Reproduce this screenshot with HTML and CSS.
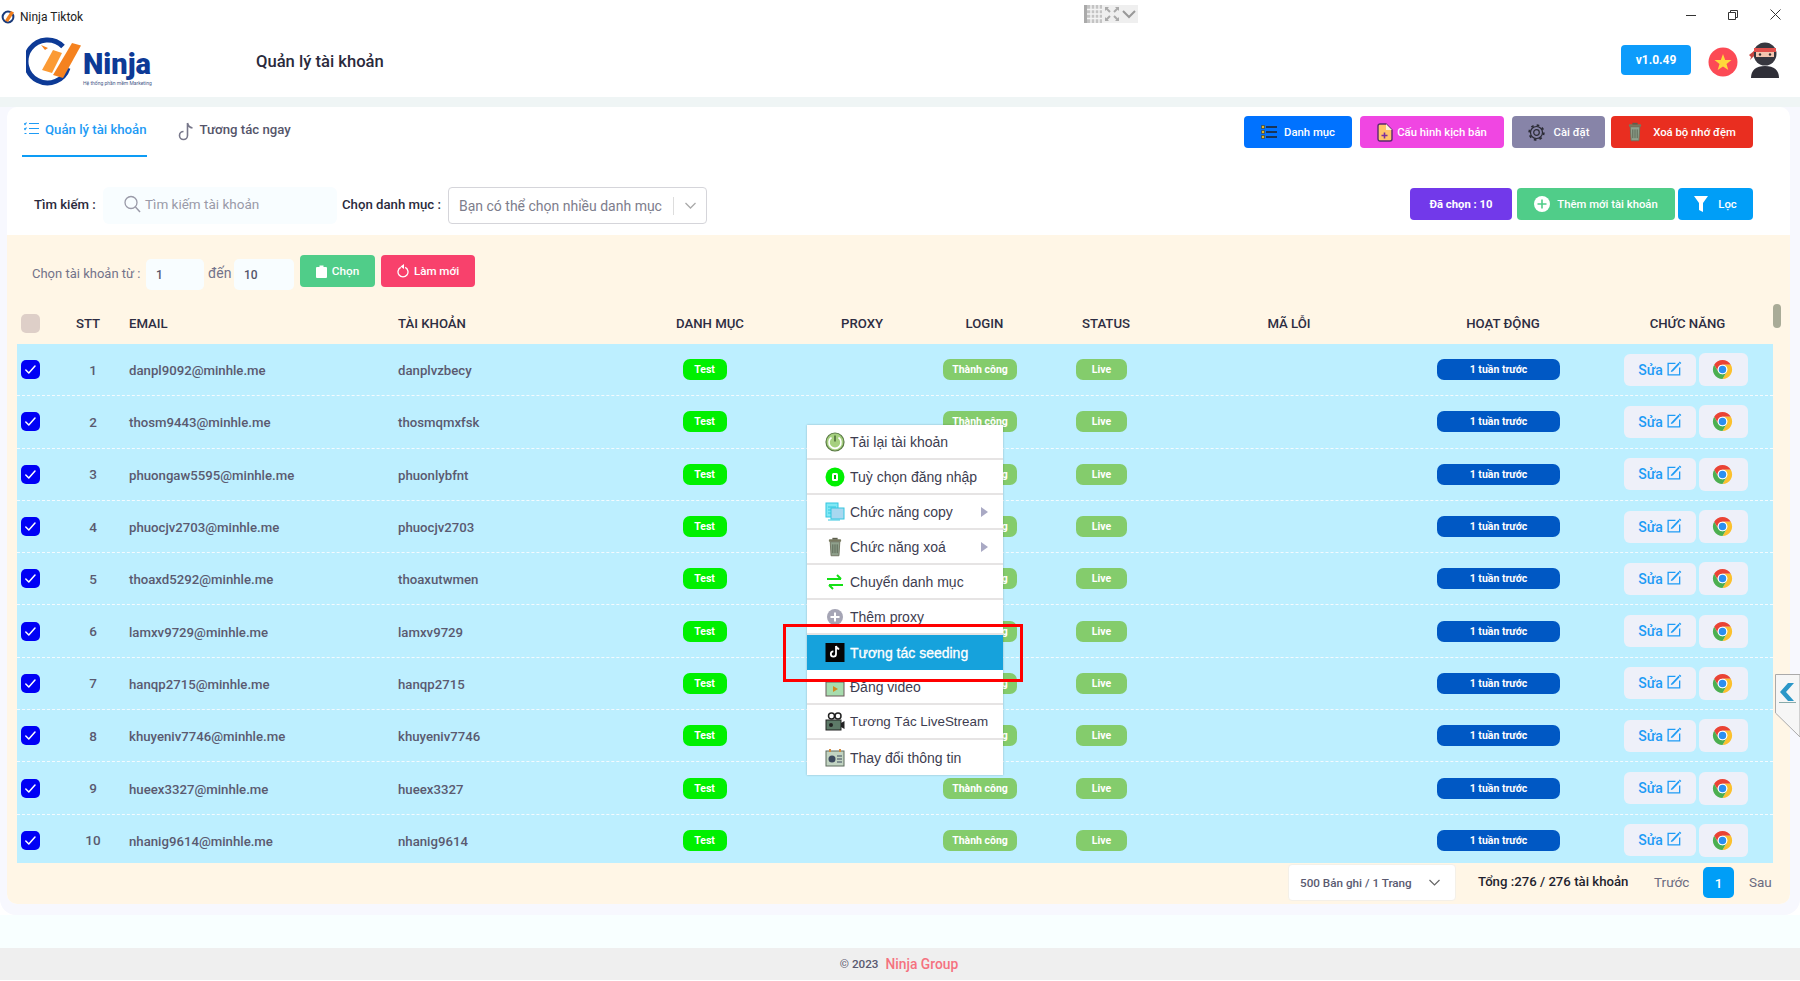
FILE: index.html
```html
<!DOCTYPE html>
<html lang="vi">
<head>
<meta charset="utf-8">
<title>Ninja Tiktok</title>
<link rel="stylesheet" href="styles.css">
</head>
<body>
<svg class="sprite" width="0" height="0" aria-hidden="true">
  <symbol id="chrome" viewBox="0 0 48 48">
    <path fill="#ea4335" d="M4.95 13A22 22 0 0 1 43.05 13H24A11 11 0 0 0 14.47 29.5Z"/>
    <path fill="#fbc02d" transform="rotate(120 24 24)" d="M4.95 13A22 22 0 0 1 43.05 13H24A11 11 0 0 0 14.47 29.5Z"/>
    <path fill="#4caf50" transform="rotate(240 24 24)" d="M4.95 13A22 22 0 0 1 43.05 13H24A11 11 0 0 0 14.47 29.5Z"/>
    <circle cx="24" cy="24" r="11" fill="#fff"/>
    <circle cx="24" cy="24" r="8.5" fill="#2b8ff0"/>
  </symbol>
  <symbol id="edit" viewBox="0 0 16 16">
    <path fill="none" stroke="#1e9bf5" stroke-width="1.4" d="M9 2.500H1.200v12.300h12.300V7"/>
    <path fill="none" stroke="#1e9bf5" stroke-width="1.800" d="M5.500 10.500 13 2.500"/>
    <path fill="#1e9bf5" d="M13.600.5l1.700 1.600-1 1.100-1.700-1.600zM4.600 9.600l1.600 1.500-2.200.7z"/>
  </symbol>
  <symbol id="check" viewBox="0 0 19 19">
    <rect width="19" height="19" rx="5" fill="#0000f5"/>
    <path fill="none" stroke="#fff" stroke-width="1.500" stroke-linecap="round" stroke-linejoin="round" d="M4.800 10l3 3 6.200-7"/>
  </symbol>
  <symbol id="trash" viewBox="0 0 16 22">
    <rect x="1" y="2" width="14" height="3" rx="1" fill="#77795f"/>
    <rect x="5" y="0.500" width="6" height="2" fill="#5d5f4d"/>
    <path fill="#8fa08c" stroke="#6b6f5a" d="M2.500 5h11l-1 16h-9z"/>
    <path stroke="#55604f" stroke-width="1" d="M5.500 8v10M8 8v10M10.500 8v10"/>
  </symbol>
</svg>

<header class="titlebar">
  <div class="app-name">
    <svg class="app-icon" viewBox="0 0 14 14"><circle cx="7" cy="7" r="5.400" fill="none" stroke="#1b3b7a" stroke-width="2"/><path d="M10 1l3 1.500-6 9.500-3-1.500z" fill="#f07f1e"/></svg>
    <span>Ninja Tiktok</span>
  </div>
  <div class="tb-widget">
    <svg width="18" height="18" viewBox="0 0 18 18"><rect width="18" height="18" fill="#c4c4c4"/><rect x="0" width="3" height="18" fill="#aaa"/><path stroke="#f4f4f4" stroke-width="1.400" d="M3 4.500h15M3 9h15M3 13.500h15M7 0v18M11 0v18M15 0v18"/></svg>
    <svg width="14" height="14" viewBox="0 0 14 14"><path fill="none" stroke="#aaa" stroke-width="2" d="M1 1l4 4M13 1L9 5M1 13l4-4M13 13L9 9"/><path fill="#aaa" d="M0 0h4L0 4zM14 0h-4l4 4zM0 14h4l-4-4zM14 14h-4l4-4z"/></svg>
    <svg width="14" height="9" viewBox="0 0 14 9"><path fill="none" stroke="#999" stroke-width="2" d="M1 1l6 6 6-6"/></svg>
  </div>
  <div class="win-controls">
    <svg width="10" height="10" viewBox="0 0 10 10"><path stroke="#333" d="M0 5.500h10"/></svg>
    <svg width="10" height="10" viewBox="0 0 10 10"><path fill="none" stroke="#333" d="M.5 2.500h7v7h-7zM2.500 2.500v-2h7v7h-2"/></svg>
    <svg width="11" height="11" viewBox="0 0 11 11"><path stroke="#333" d="M.5.500l10 10M10.500.500l-10 10"/></svg>
  </div>
</header>

<div class="topbar">
  <div class="logo">
    <svg class="logo-mark" viewBox="0 0 56 50">
      <path fill="none" stroke="#0d3a96" stroke-width="5" d="M37 9.500A21.500 21.500 0 1 0 42 31"/>
      <path fill="#f5821f" d="M46 6l9 2.500L37 41l-10-3z"/>
      <path fill="#fb9a34" d="M27 13l9 3-10 20-10-3z"/>
      <path fill="#f5821f" d="M15 8l7 3-3 2z"/>
    </svg>
    <div class="logo-text"><span class="logo-name">Ninja</span><span class="logo-sub">Hệ thống phần mềm Marketing</span></div>
  </div>
  <h1 class="page-title">Quản lý tài khoản</h1>
  <div class="top-right">
    <span class="version">v1.0.49</span>
    <svg class="flag" viewBox="0 0 30 30"><circle cx="15" cy="15" r="14.500" fill="#fc4a55"/><path fill="#ffd83b" d="M15 7l2.200 5.900 6.300.2-5 3.900 1.800 6.100-5.300-3.500-5.300 3.500 1.800-6.100-5-3.900 6.300-.2z"/></svg>
    <svg class="avatar" viewBox="0 0 32 36">
      <path fill="#2f2f38" d="M2 36c0-8 5-12 14-12s14 4 14 12z"/>
      <circle cx="16" cy="12" r="11.500" fill="#37373f"/>
      <rect x="5" y="6" width="22" height="4" fill="#e2504c"/>
      <rect x="7" y="10" width="18" height="5" fill="#f4c6b0"/>
      <circle cx="11" cy="12.500" r="1.200" fill="#333"/><circle cx="21" cy="12.500" r="1.200" fill="#333"/>
      <path fill="#c8453f" d="M5 9L0 13l2 2-1 3 4-4z"/>
    </svg>
  </div>
</div>

<main class="shell">
  <section class="card">
    <div class="tabs-row">
      <nav class="tabs">
        <a class="tab tab-active">
          <svg width="15" height="13" viewBox="0 0 15 13"><path fill="none" stroke="#1e9bf5" stroke-width="1.200" d="M5 1.500h10M5 6.500h10M5 11.500h10M0 1.500l1 1 1.500-2M0 6.500l1 1 1.500-2M0.500 11.500h2"/></svg>
          <span>Quản lý tài khoản</span>
        </a>
        <a class="tab">
          <svg width="16" height="19" viewBox="0 0 16 19"><path fill="none" stroke="#77778a" stroke-width="1.600" d="M9.500 1v12.500a4 4 0 1 1-4-4M9.500 1c.5 3 2.500 4.500 5 5"/></svg>
          <span>Tương tác ngay</span>
        </a>
      </nav>
      <div class="actions">
        <button class="btn btn-blue btn-cat">
          <svg width="16" height="14" viewBox="0 0 16 14"><path stroke="#222" stroke-width="1.300" d="M5 2h11M5 7h11M5 12h11"/><path fill="#e3b71d" stroke="#333" stroke-width=".6" d="M.5.500h3v3h-3zM.5 5.500h3v3h-3zM.5 10.500h3v3h-3z"/></svg>
          Danh mục
        </button>
        <button class="btn btn-pink btn-cfg">
          <svg width="16" height="19" viewBox="0 0 16 19"><path fill="#ffc56a" stroke="#5a2a6e" stroke-width="1.400" d="M1 3a2 2 0 0 1 2-2h6l6 6v9a2 2 0 0 1-2 2H3a2 2 0 0 1-2-2z"/><path fill="#fff3d9" d="M9 1l6 6H9z"/><path stroke="#7a2f9e" stroke-width="1.600" d="M7.500 9.500v6M4.500 12.500h6"/></svg>
          Cấu hình kịch bản
        </button>
        <button class="btn btn-gray btn-set">
          <svg width="17" height="17" viewBox="0 0 17 17"><circle cx="8.500" cy="8.500" r="2.800" fill="none" stroke="#2b2b35" stroke-width="1.200"/><circle cx="8.500" cy="8.500" r="6" fill="none" stroke="#2b2b35" stroke-width="1.200"/><circle cx="8.500" cy="8.500" r="7.300" fill="none" stroke="#2b2b35" stroke-width="1.800" stroke-dasharray="2.600 3.130"/></svg>
          Cài đặt
        </button>
        <button class="btn btn-red btn-del">
          <svg class="ico-trash"><use href="#trash"/></svg>
          Xoá bộ nhớ đệm
        </button>
      </div>
    </div>

    <div class="filters">
      <label class="lbl-strong lbl-search">Tìm kiếm :</label>
      <div class="search">
        <svg width="17" height="18" viewBox="0 0 17 18"><circle cx="7" cy="7.500" r="6" fill="none" stroke="#9a9aa8" stroke-width="1.300"/><path stroke="#9a9aa8" stroke-width="1.500" d="M11.500 12l4.500 5"/></svg>
        <span>Tìm kiếm tài khoản</span>
      </div>
      <label class="lbl-strong lbl-cat">Chọn danh mục :</label>
      <div class="select">
        <span class="select-text">Bạn có thể chọn nhiều danh mục</span>
        <i class="select-sep"></i>
        <svg width="11" height="7" viewBox="0 0 11 7"><path fill="none" stroke="#aaa" stroke-width="1.300" d="M.5 1l5 5 5-5"/></svg>
      </div>
      <div class="filter-actions">
        <button class="btn btn-purple btn-sel">Đã chọn : 10</button>
        <button class="btn btn-green btn-add">
          <svg width="16" height="16" viewBox="0 0 16 16"><circle cx="8" cy="8" r="8" fill="#fff"/><path stroke="#50cd89" stroke-width="1.600" d="M8 3.500v9M3.500 8h9"/></svg>
          Thêm mới tài khoản
        </button>
        <button class="btn btn-sky btn-filter">
          <svg width="14" height="16" viewBox="0 0 14 16"><path fill="#fff" d="M0 0h14L9 7v9l-4-2V7z"/></svg>
          Lọc
        </button>
      </div>
    </div>

    <div class="cream">
      <div class="pick">
        <span class="pick-label">Chọn tài khoản từ :</span>
        <span class="num-input">1</span>
        <span class="pick-to">đến</span>
        <span class="num-input num-2">10</span>
        <button class="btn btn-green btn-choose">
          <svg width="11" height="13" viewBox="0 0 11 13"><path fill="#fff" d="M1 2h2.500V.5h4V2H10a1 1 0 0 1 1 1v9a1 1 0 0 1-1 1H1a1 1 0 0 1-1-1V3a1 1 0 0 1 1-1z"/></svg>
          Chọn
        </button>
        <button class="btn btn-rose btn-reset">
          <svg width="12" height="14" viewBox="0 0 12 14"><path fill="none" stroke="#fff" stroke-width="1.300" d="M8.200 3.400a5 5 0 1 1-4.400 0"/><path fill="#fff" d="M7 0v5L3.500 2.500z"/></svg>
          Làm mới
        </button>
      </div>

      <div class="thead grid">
        <div class="c-check"><span class="head-box"></span></div>
        <div class="c-stt-h">STT</div>
        <div>EMAIL</div>
        <div>TÀI KHOẢN</div>
        <div class="c-center">DANH MỤC</div>
        <div class="c-center">PROXY</div>
        <div class="c-center">LOGIN</div>
        <div class="c-center">STATUS</div>
        <div class="c-center">MÃ LỖI</div>
        <div class="c-center">HOẠT ĐỘNG</div>
        <div class="c-center">CHỨC NĂNG</div>
      </div>

      <div class="tbody">
        <div class="row grid">
          <div class="c-check"><svg class="ico-check"><use href="#check"/></svg></div>
          <div class="c-stt">1</div><div class="c-text">danpl9092@minhle.me</div><div class="c-text">danplvzbecy</div>
          <div class="c-pill c-test"><span class="pill pill-test">Test</span></div><div></div>
          <div class="c-pill"><span class="pill pill-ok">Thành công</span></div>
          <div class="c-pill"><span class="pill pill-live">Live</span></div><div></div>
          <div class="c-pill"><span class="pill pill-time">1 tuần trước</span></div>
          <div class="c-act"><span class="edit">Sửa <svg class="ico-edit"><use href="#edit"/></svg></span><span class="chrome"><svg class="ico-chrome"><use href="#chrome"/></svg></span></div>
        </div>
        <div class="row grid">
          <div class="c-check"><svg class="ico-check"><use href="#check"/></svg></div>
          <div class="c-stt">2</div><div class="c-text">thosm9443@minhle.me</div><div class="c-text">thosmqmxfsk</div>
          <div class="c-pill c-test"><span class="pill pill-test">Test</span></div><div></div>
          <div class="c-pill"><span class="pill pill-ok">Thành công</span></div>
          <div class="c-pill"><span class="pill pill-live">Live</span></div><div></div>
          <div class="c-pill"><span class="pill pill-time">1 tuần trước</span></div>
          <div class="c-act"><span class="edit">Sửa <svg class="ico-edit"><use href="#edit"/></svg></span><span class="chrome"><svg class="ico-chrome"><use href="#chrome"/></svg></span></div>
        </div>
        <div class="row grid">
          <div class="c-check"><svg class="ico-check"><use href="#check"/></svg></div>
          <div class="c-stt">3</div><div class="c-text">phuongaw5595@minhle.me</div><div class="c-text">phuonlybfnt</div>
          <div class="c-pill c-test"><span class="pill pill-test">Test</span></div><div></div>
          <div class="c-pill"><span class="pill pill-ok">Thành công</span></div>
          <div class="c-pill"><span class="pill pill-live">Live</span></div><div></div>
          <div class="c-pill"><span class="pill pill-time">1 tuần trước</span></div>
          <div class="c-act"><span class="edit">Sửa <svg class="ico-edit"><use href="#edit"/></svg></span><span class="chrome"><svg class="ico-chrome"><use href="#chrome"/></svg></span></div>
        </div>
        <div class="row grid">
          <div class="c-check"><svg class="ico-check"><use href="#check"/></svg></div>
          <div class="c-stt">4</div><div class="c-text">phuocjv2703@minhle.me</div><div class="c-text">phuocjv2703</div>
          <div class="c-pill c-test"><span class="pill pill-test">Test</span></div><div></div>
          <div class="c-pill"><span class="pill pill-ok">Thành công</span></div>
          <div class="c-pill"><span class="pill pill-live">Live</span></div><div></div>
          <div class="c-pill"><span class="pill pill-time">1 tuần trước</span></div>
          <div class="c-act"><span class="edit">Sửa <svg class="ico-edit"><use href="#edit"/></svg></span><span class="chrome"><svg class="ico-chrome"><use href="#chrome"/></svg></span></div>
        </div>
        <div class="row grid">
          <div class="c-check"><svg class="ico-check"><use href="#check"/></svg></div>
          <div class="c-stt">5</div><div class="c-text">thoaxd5292@minhle.me</div><div class="c-text">thoaxutwmen</div>
          <div class="c-pill c-test"><span class="pill pill-test">Test</span></div><div></div>
          <div class="c-pill"><span class="pill pill-ok">Thành công</span></div>
          <div class="c-pill"><span class="pill pill-live">Live</span></div><div></div>
          <div class="c-pill"><span class="pill pill-time">1 tuần trước</span></div>
          <div class="c-act"><span class="edit">Sửa <svg class="ico-edit"><use href="#edit"/></svg></span><span class="chrome"><svg class="ico-chrome"><use href="#chrome"/></svg></span></div>
        </div>
        <div class="row grid">
          <div class="c-check"><svg class="ico-check"><use href="#check"/></svg></div>
          <div class="c-stt">6</div><div class="c-text">lamxv9729@minhle.me</div><div class="c-text">lamxv9729</div>
          <div class="c-pill c-test"><span class="pill pill-test">Test</span></div><div></div>
          <div class="c-pill"><span class="pill pill-ok">Thành công</span></div>
          <div class="c-pill"><span class="pill pill-live">Live</span></div><div></div>
          <div class="c-pill"><span class="pill pill-time">1 tuần trước</span></div>
          <div class="c-act"><span class="edit">Sửa <svg class="ico-edit"><use href="#edit"/></svg></span><span class="chrome"><svg class="ico-chrome"><use href="#chrome"/></svg></span></div>
        </div>
        <div class="row grid">
          <div class="c-check"><svg class="ico-check"><use href="#check"/></svg></div>
          <div class="c-stt">7</div><div class="c-text">hanqp2715@minhle.me</div><div class="c-text">hanqp2715</div>
          <div class="c-pill c-test"><span class="pill pill-test">Test</span></div><div></div>
          <div class="c-pill"><span class="pill pill-ok">Thành công</span></div>
          <div class="c-pill"><span class="pill pill-live">Live</span></div><div></div>
          <div class="c-pill"><span class="pill pill-time">1 tuần trước</span></div>
          <div class="c-act"><span class="edit">Sửa <svg class="ico-edit"><use href="#edit"/></svg></span><span class="chrome"><svg class="ico-chrome"><use href="#chrome"/></svg></span></div>
        </div>
        <div class="row grid">
          <div class="c-check"><svg class="ico-check"><use href="#check"/></svg></div>
          <div class="c-stt">8</div><div class="c-text">khuyeniv7746@minhle.me</div><div class="c-text">khuyeniv7746</div>
          <div class="c-pill c-test"><span class="pill pill-test">Test</span></div><div></div>
          <div class="c-pill"><span class="pill pill-ok">Thành công</span></div>
          <div class="c-pill"><span class="pill pill-live">Live</span></div><div></div>
          <div class="c-pill"><span class="pill pill-time">1 tuần trước</span></div>
          <div class="c-act"><span class="edit">Sửa <svg class="ico-edit"><use href="#edit"/></svg></span><span class="chrome"><svg class="ico-chrome"><use href="#chrome"/></svg></span></div>
        </div>
        <div class="row grid">
          <div class="c-check"><svg class="ico-check"><use href="#check"/></svg></div>
          <div class="c-stt">9</div><div class="c-text">hueex3327@minhle.me</div><div class="c-text">hueex3327</div>
          <div class="c-pill c-test"><span class="pill pill-test">Test</span></div><div></div>
          <div class="c-pill"><span class="pill pill-ok">Thành công</span></div>
          <div class="c-pill"><span class="pill pill-live">Live</span></div><div></div>
          <div class="c-pill"><span class="pill pill-time">1 tuần trước</span></div>
          <div class="c-act"><span class="edit">Sửa <svg class="ico-edit"><use href="#edit"/></svg></span><span class="chrome"><svg class="ico-chrome"><use href="#chrome"/></svg></span></div>
        </div>
        <div class="row grid">
          <div class="c-check"><svg class="ico-check"><use href="#check"/></svg></div>
          <div class="c-stt">10</div><div class="c-text">nhanig9614@minhle.me</div><div class="c-text">nhanig9614</div>
          <div class="c-pill c-test"><span class="pill pill-test">Test</span></div><div></div>
          <div class="c-pill"><span class="pill pill-ok">Thành công</span></div>
          <div class="c-pill"><span class="pill pill-live">Live</span></div><div></div>
          <div class="c-pill"><span class="pill pill-time">1 tuần trước</span></div>
          <div class="c-act"><span class="edit">Sửa <svg class="ico-edit"><use href="#edit"/></svg></span><span class="chrome"><svg class="ico-chrome"><use href="#chrome"/></svg></span></div>
        </div>
      </div>

      <div class="pager">
        <div class="page-size">
          <span>500 Bản ghi / 1 Trang</span>
          <svg width="11" height="7" viewBox="0 0 11 7"><path fill="none" stroke="#666" stroke-width="1.200" d="M.5 1l5 5 5-5"/></svg>
        </div>
        <span class="total">Tổng :276 / 276 tài khoản</span>
        <span class="page-link page-prev">Trước</span>
        <span class="page-num">1</span>
        <span class="page-link page-next">Sau</span>
      </div>
    </div>
  </section>
</main>

<div class="spacer"></div>
<footer class="footer"><span>© 2023</span><span class="brand">Ninja Group</span></footer>

<div class="thumb"></div>

<svg class="side-tab" viewBox="0 0 25 64">
  <path fill="#f6f6f6" stroke="#aaa" d="M.5.500H25V63L.5 39z"/>
  <path fill="#2b97c8" d="M13 9l-8 9 8 9h6l-8-9 8-9z"/>
  <path stroke="#8aa" d="M4 28.500h17"/>
</svg>

<ul class="menu">
  <li class="item">
    <svg class="mi" viewBox="0 0 20 20"><circle cx="10" cy="10" r="9" fill="#a6d07f" stroke="#5a7a45" stroke-width="1.200"/><path fill="none" stroke="#fff" stroke-width="1.600" d="M6.500 5.500a6 6 0 1 0 7 0"/><path stroke="#4d6b3a" stroke-width="1.600" d="M10 3.500v6"/></svg>
    <span>Tải lại tài khoản</span>
  </li>
  <li class="item">
    <svg class="mi" viewBox="0 0 20 20"><circle cx="10" cy="10" r="9.500" fill="#00f000"/><rect x="7" y="6" width="6" height="8" rx="1.500" fill="#fff"/><rect x="9" y="8" width="2" height="4" fill="#00b800"/></svg>
    <span>Tuỳ chọn đăng nhập</span>
  </li>
  <li class="item">
    <svg class="mi" viewBox="0 0 20 20"><rect x="1" y="1" width="12" height="14" fill="#7fe8f5" stroke="#34c6e0"/><rect x="6" y="6" width="13" height="11" fill="#a8d8f0" stroke="#34c6e0"/><path stroke="#34c6e0" d="M3 5h8M3 8h3M3 11h3M3 18h12"/></svg>
    <span>Chức năng copy</span><i class="caret"></i>
  </li>
  <li class="item">
    <svg class="mi mi-trash"><use href="#trash"/></svg>
    <span>Chức năng xoá</span><i class="caret"></i>
  </li>
  <li class="item">
    <svg class="mi" viewBox="0 0 20 20"><path fill="none" stroke="#14e014" stroke-width="2" d="M2 7h14M12 3l4 4M18 13H4M8 17l-4-4"/></svg>
    <span>Chuyển danh mục</span>
  </li>
  <li class="item">
    <svg class="mi" viewBox="0 0 20 20"><circle cx="10" cy="10" r="8" fill="#a5a5b5"/><path stroke="#fff" stroke-width="2" d="M10 5.500v9M5.500 10h9"/></svg>
    <span>Thêm proxy</span>
  </li>
  <li class="item item-active">
    <svg class="mi" viewBox="0 0 20 20"><rect width="19" height="19" x=".5" fill="#050505"/><path fill="none" stroke="#fff" stroke-width="1.800" d="M11 3v8a2.600 2.600 0 1 1-2.600-2.600M11 3c.3 1.800 1.500 2.800 3.200 3"/></svg>
    <span>Tương tác seeding</span>
  </li>
  <li class="item">
    <svg class="mi" viewBox="0 0 20 20"><rect x="1" y="5" width="18" height="14" fill="#a7dcae" stroke="#6a5a5a"/><path d="M1 5l14-3 1 3z" fill="#7d6a6a"/><path fill="#d08a20" d="M8 9l5 3-5 3z"/></svg>
    <span>Đăng video</span>
  </li>
  <li class="item item-live">
    <svg class="mi" viewBox="0 0 20 20"><circle cx="6.500" cy="4" r="3" fill="none" stroke="#222" stroke-width="1.500"/><circle cx="13" cy="4" r="3" fill="none" stroke="#222" stroke-width="1.500"/><rect x="1" y="8" width="15" height="10" fill="#5d7a68" stroke="#222"/><path fill="#222" d="M16 11l3.500-2v8L16 15z"/><circle cx="6" cy="13" r="2" fill="#222"/></svg>
    <span>Tương Tác LiveStream</span>
  </li>
  <li class="item">
    <svg class="mi" viewBox="0 0 20 20"><rect x="1" y="3" width="18" height="15" fill="#c2d4c2" stroke="#5d6b5d"/><path stroke="#d08a40" stroke-width="2" d="M5 1v3M15 1v3"/><circle cx="7" cy="11" r="3.500" fill="#3c4a5e"/><path stroke="#3c4a5e" d="M12 8h5M12 11h5M12 14h5"/></svg>
    <span>Thay đổi thông tin</span>
  </li>
</ul>
<div class="callout"></div>
</body>
</html>
```

FILE: styles.css
```css
* { box-sizing: border-box; }
html, body { margin: 0; padding: 0; }
body {
  position: relative;
  width: 1800px;
  height: 981px;
  overflow: hidden;
  display: flex;
  flex-direction: column;
  background: #fff;
  font-family: Roboto, "Noto Sans", sans-serif;
  color: #3a3a50;
}
.sprite { position: absolute; }
button { font-family: inherit; border: 0; cursor: pointer; }

/* title bar */
.titlebar { height: 30px; display: flex; align-items: flex-start; flex: none; }
.app-name { width: 1084px; display: flex; align-items: center; height: 30px; padding-top: 4px; font-size: 12px; color: #222; gap: 5px; padding-left: 1px; }
.app-icon { width: 14px; height: 14px; }
.tb-widget { margin-top: 5px; width: 54px; height: 18px; background: #efefef; display: flex; align-items: center; gap: 3px; }
.win-controls { margin-left: auto; padding: 9px 19px 0 0; display: flex; gap: 32px; align-items: center; }

/* header */
.topbar { height: 67px; flex: none; display: flex; align-items: flex-start; position: relative; }
.logo { width: 256px; padding-left: 26px; display: flex; align-items: flex-start; padding-top: 7px; }
.logo-mark { width: 56px; height: 50px; flex: none; }
.logo-text { display: flex; flex-direction: column; margin-left: 1px; margin-top: 14px; }
.logo-name { font-size: 29px; line-height: 27px; font-weight: 900; color: #0d3a96; }
.logo-sub { font-size: 5px; line-height: 6px; margin-top: 2px; color: #4a5a8a; white-space: nowrap; }
.page-title { margin: 22px 0 0; font-size: 16.600px; line-height: 20px; font-weight: 500; color: #2a2a3c; }
.top-right { margin-left: auto; display: flex; align-items: flex-start; padding-right: 19px; }
.version { margin-top: 15px; width: 70px; height: 30px; background: #0d9cfb; border-radius: 4px; color: #fff; font-size: 12px; font-weight: 700; display: flex; align-items: center; justify-content: center; }
.flag { width: 30px; height: 30px; margin: 17px 0 0 17px; }
.avatar { width: 32px; height: 36px; margin: 12px 0 0 11px; }

/* shell */
.shell { flex: none; height: 818px; background: #f7f8fe; border-top: 10px solid #eff5f5; padding: 0 10px 11px 7px; border-radius: 0 0 16px 16px; }
.card { height: 797px; background: #fff; border-radius: 10px; display: flex; flex-direction: column; }
.tabs-row { height: 50px; flex: none; display: flex; justify-content: space-between; padding: 9px 37px 0 15px; }
.tabs { display: flex; gap: 31px; height: 41px; }
.tab { display: flex; align-items: flex-start; gap: 6px; font-size: 13.200px; font-weight: 500; color: #55556a; padding-top: 6px; line-height: 16px; }
.tab-active { color: #1e9bf5; border-bottom: 2px solid #0d9cf5; padding-left: 2px; }
.actions { display: flex; gap: 8px; height: 32px; }

.btn { height: 32px; border-radius: 4px; color: #fff; font-size: 11.300px; font-weight: 500; display: inline-flex; align-items: center; justify-content: center; gap: 7px; padding: 0; white-space: nowrap; }
.btn-blue { background: #0072ff; }
.btn-pink { background: #f046e2; }
.btn-gray { background: #8784a8; }
.btn-red { background: #e92e20; }
.btn-purple { background: #7239ea; font-weight: 700; }
.btn-green { background: #50cd89; }
.btn-sky { background: #009ef7; }
.btn-rose { background: #f8416c; }
.btn-cat { width: 108px; }
.btn-cfg { width: 144px; gap: 4px; }
.btn-set { width: 93px; gap: 9px; }
.btn-del { width: 142px; margin-left: -2px; gap: 11px; }
.ico-trash { width: 14px; height: 20px; }

/* filters */
.filters { height: 78px; flex: none; display: flex; align-items: flex-start; padding: 30px 37px 0 0; }
.lbl-strong { font-size: 13.200px; font-weight: 500; color: #2a2a3c; line-height: 36px; white-space: nowrap; }
.lbl-search { margin-left: 27px; width: 69px; }
.search { width: 234px; height: 37px; background: #f8fdff; border-radius: 6px; display: flex; align-items: center; gap: 4px; padding: 0 0 3px 21px; font-size: 13.500px; color: #9a9aa8; margin-right: 5px; }
.lbl-cat { width: 106px; }
.select { width: 259px; height: 37px; border: 1px solid #d5d5da; border-radius: 4px; display: flex; align-items: center; padding-left: 10px; font-size: 14px; color: #7d7d8c; }
.select-text { width: 214px; white-space: nowrap; }
.select-sep { width: 1px; height: 18px; background: #ddd; margin-right: 11px; }
.filter-actions { margin-left: auto; display: flex; height: 32px; gap: 5px; padding-top: 1px; }
.btn-sel { width: 102px; }
.btn-add { width: 158px; gap: 7px; }
.btn-filter { width: 75px; margin-left: -2px; gap: 10px; }

/* cream */
.cream { flex: 1; background: #fff6e6; border-radius: 0 0 10px 10px; padding: 20px 17px 0 10px; min-height: 0; display: flex; flex-direction: column; }
.pick { height: 34px; flex: none; display: flex; align-items: flex-start; padding-left: 15px; font-size: 13px; color: #73738a; }
.pick-label { width: 114px; line-height: 38px; white-space: nowrap; }
.num-input { width: 58px; height: 31px; margin-top: 4px; background: #f8fdff; border-radius: 5px; font-size: 12px; font-weight: 500; padding-left: 10px; line-height: 33px; color: #55556a; }
.pick-to { width: 30px; padding-left: 4px; line-height: 37px; font-size: 14px; }
.num-2 { width: 60px; }
.btn-choose { width: 75px; margin-left: 6px; gap: 5px; font-size: 11.800px; }
.btn-reset { width: 94px; margin-left: 6px; gap: 5px; font-size: 11.600px; }

/* table */
.grid { display: grid; grid-template-columns: 55px 57px 269px 230px 164px 140px 105px 138px 228px 200px 169px; }
.thead { height: 55px; flex: none; align-items: end; font-size: 13.200px; font-weight: 500; color: #2d2d42; padding-bottom: 11px; line-height: 18px; }
.c-check { padding-left: 4px; }
.head-box { display: block; width: 19px; height: 19px; border-radius: 5px; background: #decfc8; }
.c-stt-h { padding-left: 4px; }
.c-center { text-align: center; }
.tbody { height: 519px; flex: none; overflow: hidden; background: #bdefff; }
.row { height: 52.300px; align-items: center; font-size: 13.200px; font-weight: 500; color: #5a5a70; border-bottom: 1px dashed #f4fbff; }
.c-text { padding-top: 2px; }
.ico-check { width: 19px; height: 19px; display: block; }
.c-stt { text-align: center; padding-right: 15px; font-weight: 500; font-size: 13.500px; }
.c-pill { display: flex; justify-content: center; padding-right: 9px; }
.c-test { padding-right: 11px; }
.pill { height: 21px; border-radius: 7px; color: #fff; font-size: 10.500px; font-weight: 700; display: flex; align-items: center; justify-content: center; }
.pill-test { width: 44px; background: #00f000; }
.pill-ok { width: 74px; background: #84cc6c; }
.pill-live { width: 51px; background: #84cc6c; }
.pill-time { width: 123px; background: #0058c4; }
.c-act { display: flex; gap: 3px; padding-left: 21px; align-items: center; }
.edit { width: 72px; height: 32px; border-radius: 6px; background: #eef0f9; color: #1e9bf5; font-size: 14px; font-weight: 500; display: flex; align-items: center; justify-content: center; gap: 4px; }
.ico-edit { width: 15px; height: 15px; margin-bottom: 3px; }
.chrome { width: 49px; height: 33px; border-radius: 6px; background: #eef0f9; display: flex; align-items: center; justify-content: center; }
.ico-chrome { width: 21px; height: 21px; margin-left: -2px; }

/* pager */
.pager { height: 41px; flex: none; display: flex; align-items: flex-start; padding: 1px 0 0 1271px; }
.page-size { width: 168px; height: 37px; background: #fff; border-radius: 4px; border: 1px solid #f4f0e8; font-size: 11.700px; font-weight: 500; color: #5a5a70; display: flex; align-items: center; justify-content: space-between; padding: 0 15px 0 11px; }
.total { margin-left: 22px; width: 151px; font-size: 13.200px; font-weight: 500; color: #1f1f2e; line-height: 36px; white-space: nowrap; }
.page-link { font-size: 13.500px; color: #6b6b80; line-height: 36px; }
.page-prev { margin-left: 25px; width: 35px; }
.page-num { margin: 3px 15px 0 14px; width: 31px; height: 31px; border-radius: 5px; background: #009ef7; color: #fff; font-size: 13.500px; font-weight: 500; display: flex; align-items: center; justify-content: center; }

/* bottom */
.spacer { flex: 1; background: #f8ffff; }
.footer { height: 32px; flex: none; margin-bottom: 1px; background: #efefef; display: flex; justify-content: center; align-items: center; gap: 7px; font-size: 11.700px; font-weight: 500; color: #5a5a70; padding-right: 2px; }
.brand { color: #f5727f; font-size: 13.800px; }

/* overlays */
.thumb { position: absolute; left: 1773px; top: 304px; width: 8px; height: 24px; border-radius: 4px; background: #a9ab97; }
.side-tab { position: absolute; left: 1775px; top: 674px; width: 25px; height: 64px; }
.menu { position: absolute; left: 807px; top: 425px; width: 196px; margin: 0; padding: 0; list-style: none; background: #fff; box-shadow: 0 0 2px rgba(0,0,0,.25); font-family: "Liberation Sans", Arial, sans-serif; font-size: 14px; color: #3d3d50; }
.item { height: 35px; display: flex; align-items: center; padding-left: 18px; gap: 5px; border-bottom: 2px solid #e6e4e4; white-space: nowrap; }
.item:last-child { border-bottom: 0; }
.item-live { font-size: 13.400px; }
.mi { width: 20px; height: 20px; flex: none; }
.mi-trash { width: 14px; height: 20px; margin: 0 3px; }
.caret { margin-left: auto; margin-right: 15px; border-left: 7px solid #a9a9c4; border-top: 5px solid transparent; border-bottom: 5px solid transparent; }
.item-active { background: #16a2dc; color: #fff; font-size: 14px; border-bottom: 0; height: 35px; position: relative; -webkit-text-stroke: .3px #fff; }
.callout { position: absolute; left: 783px; top: 624px; width: 240px; height: 58px; border: 3px solid #f00; }
```
